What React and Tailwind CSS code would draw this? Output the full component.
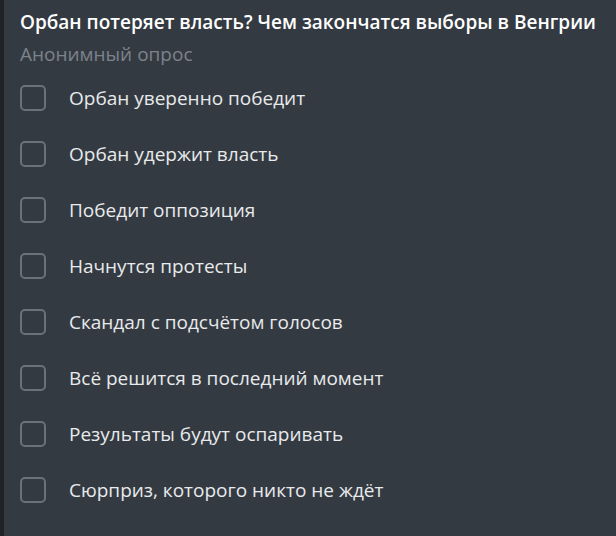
export default function App() {
  const options = [
    'Орбан уверенно победит',
    'Орбан удержит власть',
    'Победит оппозиция',
    'Начнутся протесты',
    'Скандал с подсчётом голосов',
    'Всё решится в последний момент',
    'Результаты будут оспаривать',
    'Сюрприз, которого никто не ждёт',
  ];

  return (
    <div className="flex w-[616px] h-[536px] bg-[#343a42]" style={{ fontFamily: '"Open Sans", sans-serif' }}>
      <div className="w-[4px] bg-[#1f2328]" />
      <div className="flex-1 pl-[16px] pt-[9px]">
        <h1 className="text-[19px] font-semibold text-white leading-[26px] whitespace-nowrap">
          Орбан потеряет власть? Чем закончатся выборы в Венгрии
        </h1>
        <p className="text-[19px] text-[#7c838b] leading-[26px] mt-[6px]">Анонимный опрос</p>
        <ul className="mt-[3px] flex flex-col">
          {options.map((opt) => (
            <li key={opt} className="flex items-center h-[56px]">
              <span className="w-[26px] h-[26px] border-2 border-[#6b7178] rounded-[5px] shrink-0" />
              <span className="ml-[23px] text-[19px] text-[#e8eaec]">{opt}</span>
            </li>
          ))}
        </ul>
      </div>
    </div>
  );
}
